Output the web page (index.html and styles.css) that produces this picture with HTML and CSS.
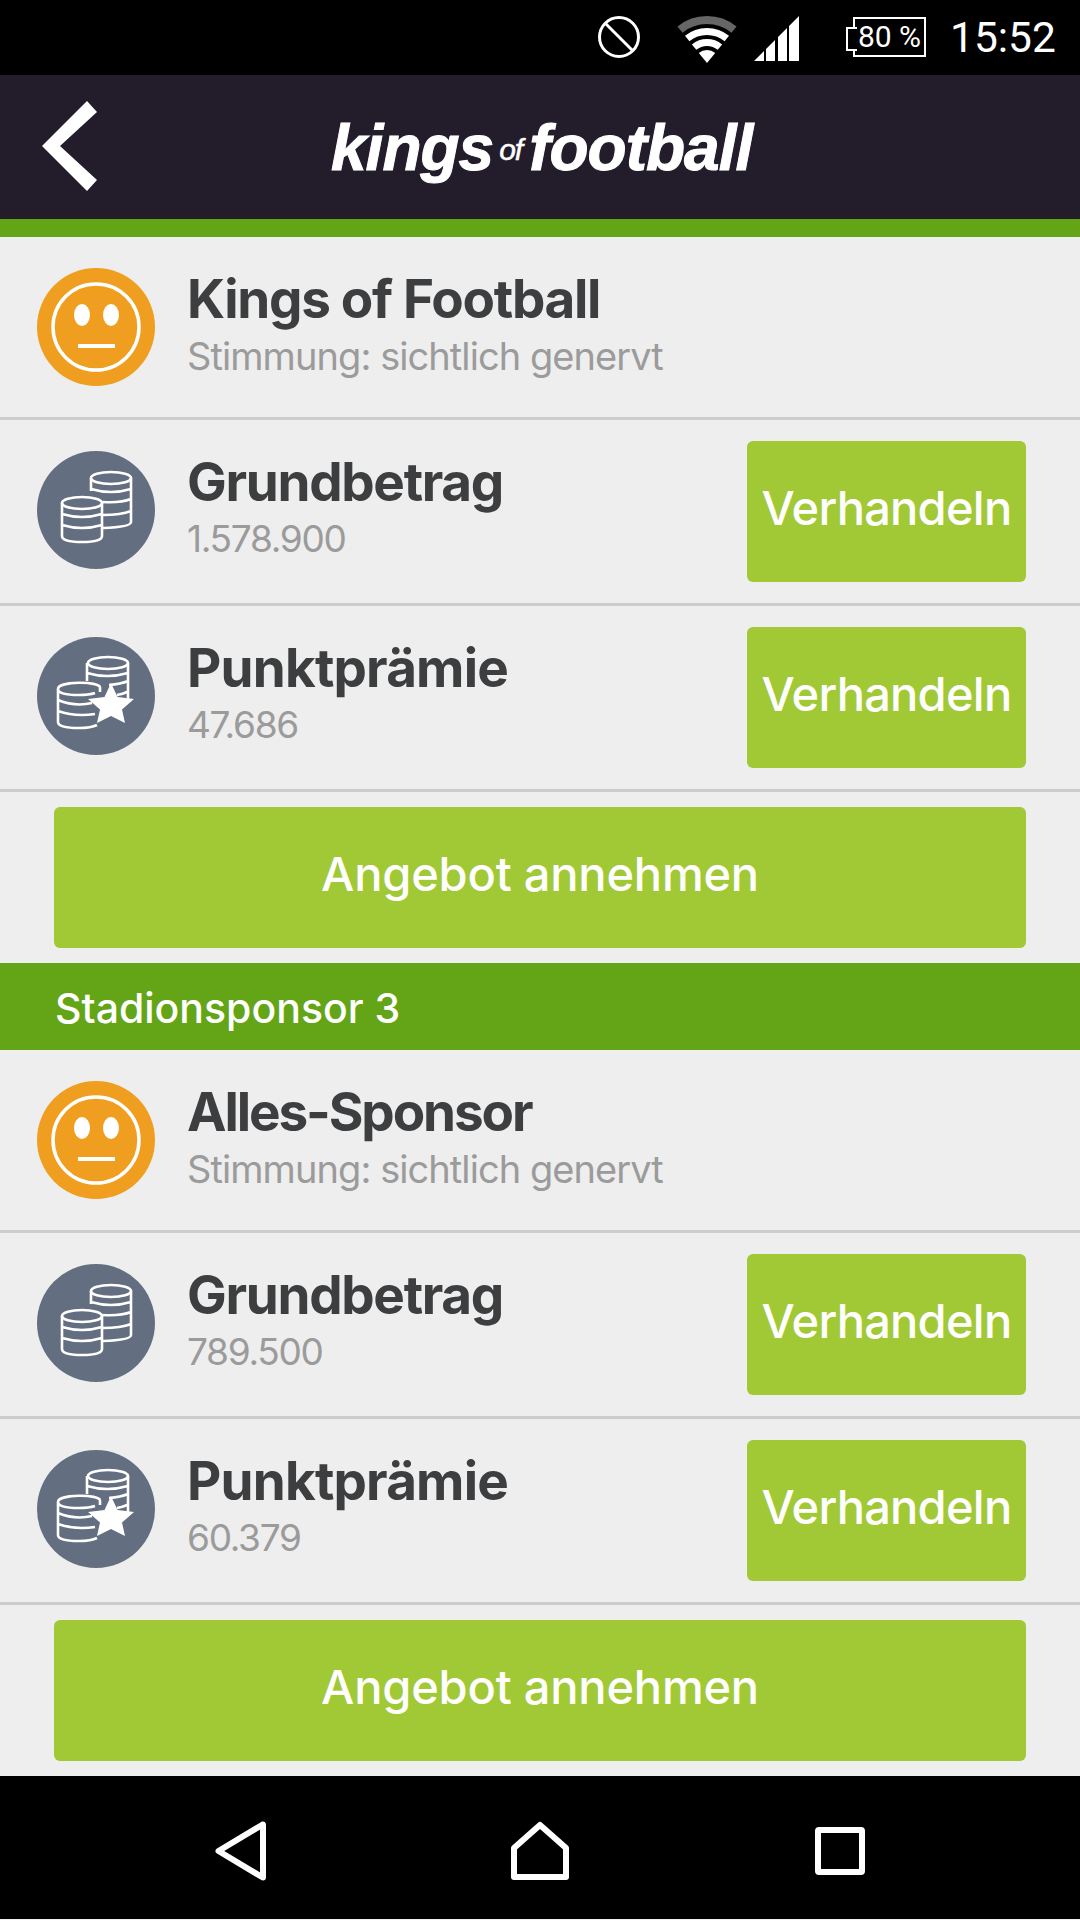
FILE: index.html
```html
<!DOCTYPE html>
<html>
    <head>
        <title>kings of football</title>
        <link rel="stylesheet" href="styles.css">
    </head>
    <body>
        <svg class="defs" width="0" height="0">
            <symbol id="mood" viewBox="0 0 118 118">
                <circle cx="59" cy="59" r="59" fill="#f09e1f"/>
                <circle cx="59" cy="59" r="43" fill="none" stroke="#fff" stroke-width="3.5"/>
                <ellipse cx="45" cy="47" rx="8" ry="11" fill="#fff"/>
                <ellipse cx="74" cy="47" rx="8" ry="11" fill="#fff"/>
                <rect x="41" y="76" width="37" height="4" fill="#fff"/>
            </symbol>
            <symbol id="coins" viewBox="0 0 118 118">
                <circle cx="59" cy="59" r="59" fill="#636e80"/>
                <g fill="none" stroke="#fff" stroke-width="2.600">
                    <ellipse cx="74" cy="27" rx="20" ry="6"/>
                    <path d="M54 27V40M94 27V71Q94 76 66 77M54 38Q74 44 94 38M66 51Q84 52 94 48M66 64Q84 64 94 60"/>
                    <ellipse cx="45" cy="52" rx="20" ry="6"/>
                    <path d="M25 52V85Q25 91 45 91T65 85V52M25 63Q45 69 65 63M25 74Q45 80 65 74"/>
                </g>
            </symbol>
            <symbol id="coins-star" viewBox="0 0 118 118">
                <circle cx="59" cy="59" r="59" fill="#636e80"/>
                <g fill="none" stroke="#fff" stroke-width="2.600">
                    <ellipse cx="71" cy="26" rx="20" ry="6"/>
                    <path d="M50 26V44M91 26V66M50 36Q70 42 91 36M72 48Q84 47 91 44M80 58Q86 57 90 55"/>
                    <path d="M63 55V50.500C63 44 21 44 21 52V85Q21 91 42 91Q54 91 60 88M21 52Q21 58 42 58Q52 58 58 56M21 63Q38 70 55 66M21 74Q38 80 58 77"/>
                </g>
                <path d="M74 46L80.500 60L97 62L85 72.500L88 86L74 79L60 86L63 72.500L51 62L67.500 60Z" fill="#fff"/>
            </symbol>
        </svg>

        <div class="statusbar">
            <svg class="st-block" width="42" height="42" viewBox="0 0 42 42">
                <circle cx="21" cy="21" r="19.500" fill="none" stroke="#fff" stroke-width="3"/>
                <path d="M7 7L35 35" stroke="#fff" stroke-width="3"/>
            </svg>
            <svg class="st-wifi" width="60" height="48" viewBox="0 0 60 48">
                <path d="M3 13.600A43 43 0 0 1 57 13.600" fill="none" stroke="#666" stroke-width="8"/>
                <path d="M10.200 22.500A31.500 31.500 0 0 1 49.800 22.500" fill="none" stroke="#fff" stroke-width="7"/>
                <path d="M17.100 31.100A20.500 20.500 0 0 1 42.900 31.100" fill="none" stroke="#fff" stroke-width="7"/>
                <path d="M30 47L21.800 36.900A13 13 0 0 1 38.200 36.900Z" fill="#fff"/>
            </svg>
            <svg class="st-signal" width="45" height="45" viewBox="0 0 45 45">
                <path d="M0 45L10 35V45ZM12 45V33L21 24V45ZM24 45V21L33 12V45ZM35 45V10L45 0V45Z" fill="#fff"/>
            </svg>
            <div class="st-battery">80 %</div>
            <div class="st-time">15:52</div>
        </div>

        <div class="header">
            <svg class="back" width="56" height="92" viewBox="0 0 56 92">
                <path d="M45 1L55 12L18 46L55 80L45 91L0 46Z" fill="#fff"/>
            </svg>
            <div class="logo">kings<span class="logo-of">of</span>football</div>
        </div>

        <div class="content">
            <div class="row row-top">
                <svg class="icon"><use href="#mood"/></svg>
                <div class="info">
                    <div class="name">Kings of Football</div>
                    <div class="sub">Stimmung: sichtlich genervt</div>
                </div>
            </div>
            <div class="row">
                <svg class="icon"><use href="#coins"/></svg>
                <div class="info">
                    <div class="name">Grundbetrag</div>
                    <div class="sub sub-num">1.578.900</div>
                </div>
                <div class="btn btn-small">Verhandeln</div>
            </div>
            <div class="row">
                <svg class="icon"><use href="#coins-star"/></svg>
                <div class="info">
                    <div class="name name-wide">Punktprämie</div>
                    <div class="sub sub-num">47.686</div>
                </div>
                <div class="btn btn-small">Verhandeln</div>
            </div>
            <div class="btn btn-wide">Angebot annehmen</div>

            <div class="section">Stadionsponsor 3</div>

            <div class="row row-top">
                <svg class="icon"><use href="#mood"/></svg>
                <div class="info">
                    <div class="name name-tight">Alles-Sponsor</div>
                    <div class="sub">Stimmung: sichtlich genervt</div>
                </div>
            </div>
            <div class="row">
                <svg class="icon"><use href="#coins"/></svg>
                <div class="info">
                    <div class="name">Grundbetrag</div>
                    <div class="sub sub-num">789.500</div>
                </div>
                <div class="btn btn-small">Verhandeln</div>
            </div>
            <div class="row">
                <svg class="icon"><use href="#coins-star"/></svg>
                <div class="info">
                    <div class="name name-wide">Punktprämie</div>
                    <div class="sub sub-num">60.379</div>
                </div>
                <div class="btn btn-small">Verhandeln</div>
            </div>
            <div class="btn btn-wide">Angebot annehmen</div>
        </div>

        <div class="navbar">
            <svg width="56" height="62" viewBox="0 0 56 62">
                <path d="M51 5V57Q51 58 50 57L6.500 31L50 5Q51 4 51 5Z" fill="none" stroke="#fff" stroke-width="6" stroke-linejoin="round"/>
            </svg>
            <svg width="58" height="60" viewBox="0 0 58 60">
                <path d="M3 27L29 4L55 27V56H3Z" fill="none" stroke="#fff" stroke-width="6" stroke-linejoin="round"/>
            </svg>
            <svg width="50" height="48" viewBox="0 0 50 48">
                <rect x="3" y="3" width="44" height="42" rx="1" fill="none" stroke="#fff" stroke-width="6"/>
            </svg>
        </div>
    </body>
</html>
```

FILE: styles.css
```css
* {
    box-sizing:border-box;
}
html, body {
    margin:0;
    padding:0;
}
body {
    width:1080px;
    height:1920px;
    background:#eee;
    font-family:'Inter', sans-serif;
    overflow:hidden;
}
.defs {
    display:block;
    height:0;
}

/* status bar */
.statusbar {
    height:75px;
    background:#000;
    display:flex;
    align-items:flex-start;
    color:#fff;
    font-family:'Roboto', sans-serif;
}
.st-block {
    margin:16px 0 0 598px;
}
.st-wifi {
    margin:16px 0 0 37px;
}
.st-signal {
    margin:16px 0 0 17px;
}
.st-battery {
    position:relative;
    width:73px;
    height:40px;
    margin:17px 0 0 54px;
    border:2px solid #fff;
    font-size:30px;
    line-height:35px;
    text-align:center;
    white-space:nowrap;
}
.st-battery::before {
    content:'';
    position:absolute;
    left:-9px;
    top:8px;
    width:9px;
    height:20px;
    background:#000;
    border:2px solid #fff;
    border-right:0;
}
.st-time {
    margin:14px 0 0 24px;
    font-size:42.500px;
    line-height:48px;
}

/* header */
.header {
    height:162px;
    background:#231c2b;
    border-bottom:18px solid #63a516;
    display:flex;
    align-items:center;
    position:relative;
}
.back {
    margin:-3px 0 0 42px;
}
.logo {
    position:absolute;
    left:331px;
    top:31px;
    font:italic bold 64px/84px 'Liberation Sans', sans-serif;
    letter-spacing:-1px;
    color:#fff;
    -webkit-text-stroke:1px #fff;
    white-space:nowrap;
}
.logo-of {
    font-size:30px;
    font-weight:normal;
    letter-spacing:-1px;
    margin:0 7px 0 6px;
    -webkit-text-stroke:0.500px #fff;
    vertical-align:10px;
}

/* rows */
.content {
    height:1539px;
}
.row {
    height:186px;
    display:flex;
    align-items:center;
    padding:0 54px 0 37px;
    border-bottom:3px solid #ccc;
}
.row-top {
    height:183px;
}
.icon {
    width:118px;
    height:118px;
    flex:none;
    margin:0 32px 3px 0;
}
.row-top .icon {
    margin-bottom:0;
}
.info {
    flex:1;
    min-width:0;
    white-space:nowrap;
    padding-bottom:10px;
}
.row-top .info {
    padding-bottom:6px;
}
.name {
    font-size:53px;
    line-height:58px;
    font-weight:700;
    letter-spacing:-1.300px;
    color:#3d3e40;
}
.name-wide {
    letter-spacing:-0.800px;
}
.name-tight {
    letter-spacing:-2.100px;
}
.sub {
    margin-top:6px;
    font-size:38px;
    line-height:44px;
    letter-spacing:-0.930px;
    color:#9b9b9b;
}
.sub-num {
    font-size:37px;
    letter-spacing:-1.300px;
}
.btn {
    background:#a1c935;
    color:#fff;
    border-radius:6px;
    display:flex;
    align-items:center;
    justify-content:center;
    padding-bottom:8px;
    font-weight:500;
    white-space:nowrap;
}
.btn-small {
    width:279px;
    height:141px;
    flex:none;
    font-size:47px;
    letter-spacing:-0.750px;
}
.btn-wide {
    height:141px;
    margin:15px 54px;
    font-size:47px;
    letter-spacing:-0.200px;
}
.section {
    height:87px;
    padding-left:55px;
    background:#63a516;
    color:#fff;
    font-size:41px;
    line-height:90px;
    font-weight:500;
}

/* navigation bar */
.navbar {
    height:143px;
    background:#000;
    padding:6px 90px 0;
    display:grid;
    grid-template-columns:repeat(3, 300px);
    justify-items:center;
    align-items:center;
}
```
